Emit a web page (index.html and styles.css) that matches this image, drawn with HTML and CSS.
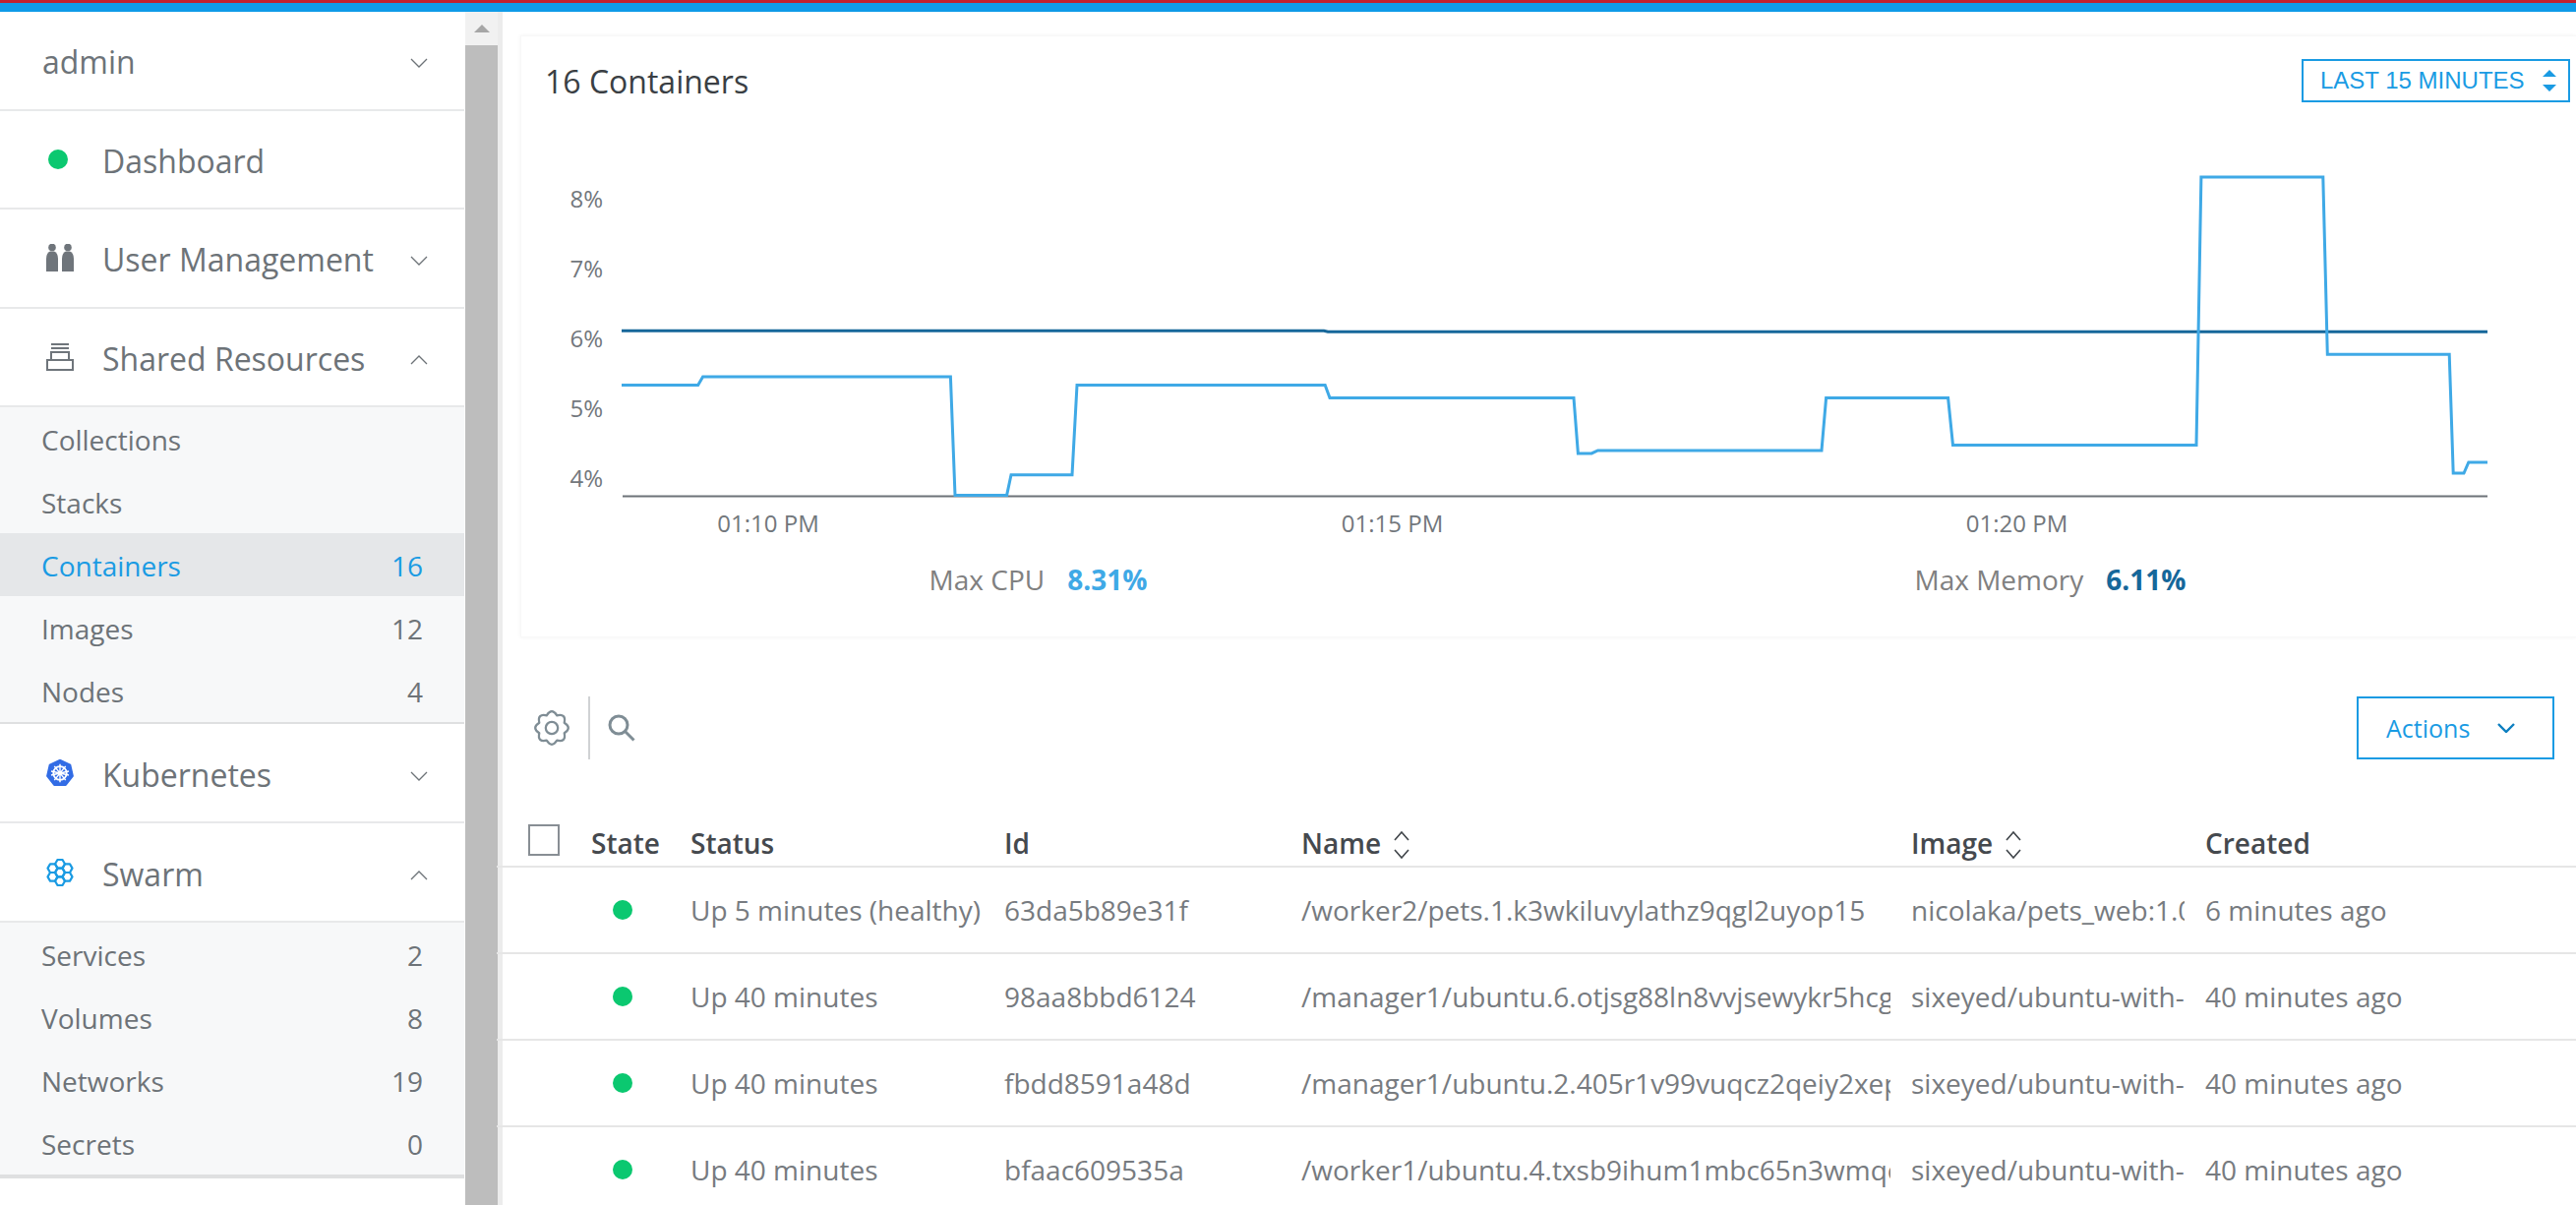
FILE: index.html
```html
<!DOCTYPE html>
<html lang="en">
<head>
    <meta charset="UTF-8">
    <meta name="viewport" content="width=device-width, initial-scale=1.0">
    <title>Containers</title>
    <link rel="stylesheet" href="styles.css">
</head>
<body>
    <div class="topbar"></div>
    <div class="app">
        <nav class="sidebar">
            <div class="nav-row nav-user">
                <span class="nav-label">admin</span>
                <svg class="chevron" viewBox="0 0 18 10"><path d="M1 1l8 8 8-8"/></svg>
            </div>
            <div class="nav-row">
                <span class="nav-icon"><span class="green-dot"></span></span>
                <span class="nav-label">Dashboard</span>
            </div>
            <div class="nav-row">
                <span class="nav-icon">
                    <svg viewBox="0 0 28 28" width="28" height="28" fill="#6f757b">
                        <circle cx="6" cy="3.5" r="3.8"/>
                        <circle cx="22" cy="3.5" r="3.8"/>
                        <path d="M0 28V15q0-6 4-7.5h4Q12 9 12 15v13z"/>
                        <path d="M16 28V15q0-6 4-7.5h4Q28 9 28 15v13z"/>
                    </svg>
                </span>
                <span class="nav-label">User Management</span>
                <svg class="chevron" viewBox="0 0 18 10"><path d="M1 1l8 8 8-8"/></svg>
            </div>
            <div class="nav-row">
                <span class="nav-icon">
                    <svg viewBox="0 0 28 28" width="28" height="28" fill="none" stroke="#6f757b" stroke-width="2">
                        <path d="M5 1h18M5 5h18"/>
                        <path d="M5 17V9h18v8"/>
                        <rect x="1" y="17" width="26" height="10"/>
                    </svg>
                </span>
                <span class="nav-label">Shared Resources</span>
                <svg class="chevron" viewBox="0 0 18 10"><path d="M1 9l8-8 8 8"/></svg>
            </div>
            <ul class="subnav">
                <li class="subnav-row"><span>Collections</span></li>
                <li class="subnav-row"><span>Stacks</span></li>
                <li class="subnav-row active"><span>Containers</span><span>16</span></li>
                <li class="subnav-row"><span>Images</span><span>12</span></li>
                <li class="subnav-row"><span>Nodes</span><span>4</span></li>
            </ul>
            <div class="nav-row nav-row-flush">
                <span class="nav-icon">
                    <svg viewBox="-14.5 -14.5 29 29" width="28" height="28">
                        <polygon points="0,-13.5 10.6,-8.4 13.2,3 5.9,12.2 -5.9,12.2 -13.2,3 -10.6,-8.4" fill="#326ce5" stroke="#326ce5" stroke-width="2.4" stroke-linejoin="round"/>
                        <circle r="7" fill="none" stroke="#fff" stroke-width="1.8"/>
                        <path d="M0-9.5V9.5M-9.3-2.1L9.3 2.1M-9.3 2.1L9.3-2.1M-5.9-7.4L5.9 7.4M5.9-7.4L-5.9 7.4" stroke="#fff" stroke-width="1.5"/>
                        <circle r="2" fill="#fff"/>
                    </svg>
                </span>
                <span class="nav-label">Kubernetes</span>
                <svg class="chevron" viewBox="0 0 18 10"><path d="M1 1l8 8 8-8"/></svg>
            </div>
            <div class="nav-row nav-row-flush">
                <span class="nav-icon">
                    <svg viewBox="0 0 28 28" width="28" height="28" fill="none" stroke="#1a9be3" stroke-width="2.2" stroke-linejoin="round">
                        <path transform="translate(14 14)" d="M-5 0L-2.5-4.33H2.5L5 0L2.5 4.33H-2.5Z"/>
                        <path transform="translate(14 5.3)" d="M-5 0L-2.5-4.33H2.5L5 0L2.5 4.33H-2.5Z"/>
                        <path transform="translate(14 22.7)" d="M-5 0L-2.5-4.33H2.5L5 0L2.5 4.33H-2.5Z"/>
                        <path transform="translate(6.5 9.67)" d="M-5 0L-2.5-4.33H2.5L5 0L2.5 4.33H-2.5Z"/>
                        <path transform="translate(21.5 9.67)" d="M-5 0L-2.5-4.33H2.5L5 0L2.5 4.33H-2.5Z"/>
                        <path transform="translate(6.5 18.33)" d="M-5 0L-2.5-4.33H2.5L5 0L2.5 4.33H-2.5Z"/>
                        <path transform="translate(21.5 18.33)" d="M-5 0L-2.5-4.33H2.5L5 0L2.5 4.33H-2.5Z"/>
                    </svg>
                </span>
                <span class="nav-label">Swarm</span>
                <svg class="chevron" viewBox="0 0 18 10"><path d="M1 9l8-8 8 8"/></svg>
            </div>
            <ul class="subnav subnav-last">
                <li class="subnav-row"><span>Services</span><span>2</span></li>
                <li class="subnav-row"><span>Volumes</span><span>8</span></li>
                <li class="subnav-row"><span>Networks</span><span>19</span></li>
                <li class="subnav-row"><span>Secrets</span><span>0</span></li>
            </ul>
        </nav>

        <div class="scrollbar">
            <div class="scroll-cap"><span class="scroll-arrow"></span></div>
            <div class="scroll-thumb"></div>
        </div>

        <main class="content">
            <section class="card">
                <div class="card-head">
                    <h1 class="card-title">16 Containers</h1>
                    <div class="range-select">
                        <span>LAST 15 MINUTES</span>
                        <svg viewBox="0 0 14 22" width="14" height="22" fill="#1a9be3"><path d="M7 0l7 7H0zM7 22l7-7H0z"/></svg>
                    </div>
                </div>
                <svg class="chart" viewBox="560 104 1980 465" width="1980" height="465">
                    <g class="y-labels">
                        <text x="613" y="211">8%</text>
                        <text x="613" y="282">7%</text>
                        <text x="613" y="353">6%</text>
                        <text x="613" y="424">5%</text>
                        <text x="613" y="495">4%</text>
                    </g>
                    <path class="axis" d="M633 504.6H2529"/>
                    <path class="line-memory" d="M632 336.3H1346L1350 337.2H2529"/>
                    <path class="line-cpu" d="M632 391.4H709.7L714.6 383H966.4L971 503.4H1023.6L1028 482.7H1090L1095 391.4H1347.2L1352 404.5H1600L1604.4 460.9H1618.2L1624.5 457.9H1852L1856.6 404.5H1980.6L1985.5 452.4H2233L2237.9 180H2361.8L2366.3 360.3H2490.2L2494.2 481H2505L2509.8 470H2529"/>
                    <g class="x-labels">
                        <text x="781" y="541">01:10 PM</text>
                        <text x="1415.5" y="541">01:15 PM</text>
                        <text x="2050.5" y="541">01:20 PM</text>
                    </g>
                </svg>
                <div class="stats">
                    <div class="stat"><span class="stat-name">Max CPU</span><b class="stat-cpu">8.31%</b></div>
                    <div class="stat"><span class="stat-name">Max Memory</span><b class="stat-mem">6.11%</b></div>
                </div>
            </section>

            <div class="toolbar">
                <svg class="gear" viewBox="0 0 40 40" width="38" height="38" fill="none" stroke="#7f8d95" stroke-width="2.4" stroke-linejoin="round">
                    <path d="M14.45 6.6Q20 -2 25.55 6.6Q35.56 4.44 33.4 14.45Q42 20 33.4 25.55Q35.56 35.56 25.55 33.4Q20 42 14.45 33.4Q4.44 35.56 6.6 25.55Q-2 20 6.6 14.45Q4.44 4.44 14.45 6.6Z"/>
                    <circle cx="20" cy="20" r="6.5"/>
                </svg>
                <span class="toolbar-sep"></span>
                <svg class="search" viewBox="0 0 28 28" width="28" height="28" fill="none" stroke="#7f8d95" stroke-width="3">
                    <circle cx="11" cy="11" r="9"/>
                    <path d="M17.5 17.5l9 9"/>
                </svg>
                <div class="actions-btn">
                    <span>Actions</span>
                    <svg viewBox="0 0 18 10" width="18" height="10" fill="none" stroke="#0d7fc0" stroke-width="2.4"><path d="M1 1l8 8 8-8"/></svg>
                </div>
            </div>

            <table class="grid">
                <colgroup>
                    <col class="col-check">
                    <col class="col-state">
                    <col class="col-status">
                    <col class="col-id">
                    <col class="col-name">
                    <col class="col-image">
                    <col>
                </colgroup>
                <thead>
                    <tr>
                        <th><span class="checkbox"></span></th>
                        <th>State</th>
                        <th>Status</th>
                        <th>Id</th>
                        <th>Name <svg class="sort" viewBox="0 0 18 28" width="18" height="28"><path d="M2 9l7-8 7 8M2 19l7 8 7-8"/></svg></th>
                        <th>Image <svg class="sort" viewBox="0 0 18 28" width="18" height="28"><path d="M2 9l7-8 7 8M2 19l7 8 7-8"/></svg></th>
                        <th>Created</th>
                    </tr>
                </thead>
                <tbody>
                    <tr>
                        <td></td>
                        <td><span class="green-dot state-dot"></span></td>
                        <td>Up 5 minutes (healthy)</td>
                        <td>63da5b89e31f</td>
                        <td><div class="clip">/worker2/pets.1.k3wkiluvylathz9qgl2uyop15</div></td>
                        <td><div class="clip">nicolaka/pets_web:1.0</div></td>
                        <td>6 minutes ago</td>
                    </tr>
                    <tr>
                        <td></td>
                        <td><span class="green-dot state-dot"></span></td>
                        <td>Up 40 minutes</td>
                        <td>98aa8bbd6124</td>
                        <td><div class="clip">/manager1/ubuntu.6.otjsg88ln8vvjsewykr5hcg</div></td>
                        <td><div class="clip">sixeyed/ubuntu-with-u</div></td>
                        <td>40 minutes ago</td>
                    </tr>
                    <tr>
                        <td></td>
                        <td><span class="green-dot state-dot"></span></td>
                        <td>Up 40 minutes</td>
                        <td>fbdd8591a48d</td>
                        <td><div class="clip">/manager1/ubuntu.2.405r1v99vuqcz2qeiy2xep</div></td>
                        <td><div class="clip">sixeyed/ubuntu-with-u</div></td>
                        <td>40 minutes ago</td>
                    </tr>
                    <tr>
                        <td></td>
                        <td><span class="green-dot state-dot"></span></td>
                        <td>Up 40 minutes</td>
                        <td>bfaac609535a</td>
                        <td><div class="clip">/worker1/ubuntu.4.txsb9ihum1mbc65n3wmqe</div></td>
                        <td><div class="clip">sixeyed/ubuntu-with-u</div></td>
                        <td>40 minutes ago</td>
                    </tr>
                </tbody>
            </table>
        </main>
    </div>
</body>
</html>
```

FILE: styles.css
```css
* {
    box-sizing: border-box;
}
html, body {
    height: 100%;
}
body {
    margin: 0;
    overflow: hidden;
    display: flex;
    flex-direction: column;
    background: #fff;
    font-family: "Open Sans", "Liberation Sans", sans-serif;
    color: #6d7378;
}
.topbar {
    height: 12px;
    flex: none;
    background: #0f9be8;
    border-top: 3px solid #c2202e;
}
.app {
    flex: 1;
    display: flex;
    min-height: 0;
}

/* sidebar */
.sidebar {
    width: 472px;
    flex: none;
    background: #fff;
}
.nav-row {
    height: 100.5px;
    display: flex;
    align-items: center;
    padding: 0 37px 0 47px;
    border-bottom: 2px solid #e8e9ea;
    font-size: 32px;
}
.nav-row-flush {
    height: 101px;
}
.nav-user {
    padding-left: 43px;
}
.nav-icon {
    width: 57px;
    flex: none;
    display: flex;
    align-items: center;
}
.nav-icon svg {
    display: block;
}
.nav-label {
    flex: 1;
    line-height: 1;
    padding-top: 4px;
}
.chevron {
    width: 18px;
    height: 10px;
    flex: none;
    margin-top: 6px;
    fill: none;
    stroke: #6d7378;
    stroke-width: 1.3;
}
.green-dot {
    display: inline-block;
    width: 20px;
    height: 20px;
    border-radius: 50%;
    background: #0bc870;
}
.nav-icon .green-dot {
    margin-left: 2px;
}
.subnav {
    list-style: none;
    margin: 0;
    padding: 0;
    background: #f7f8f9;
    border-bottom: 2px solid #dfe0e1;
    font-size: 28px;
}
.subnav-row {
    height: 64px;
    display: flex;
    align-items: center;
    justify-content: space-between;
    padding: 2px 42px 0;
}
.subnav-last {
    border-bottom-width: 4px;
}
.subnav-row.active {
    background: #e5e7e9;
    color: #1a9be3;
}

/* fake browser scrollbar */
.scrollbar {
    width: 38px;
    flex: none;
    margin-left: 1px;
    display: flex;
    flex-direction: column;
    background: #f0f0f0;
    border-right: 5px solid #ececec;
}
.scroll-cap {
    height: 34px;
    flex: none;
    display: flex;
    justify-content: center;
    padding-top: 13px;
    background: #f1f1f1;
}
.scroll-arrow {
    width: 0;
    height: 0;
    border-left: 8px solid transparent;
    border-right: 8px solid transparent;
    border-bottom: 8px solid #a6a6a6;
}
.scroll-thumb {
    flex: 1;
    background: #bdbdbd;
}

/* main column */
.content {
    flex: 1;
    min-width: 0;
    overflow: hidden;
    margin-left: -6px;
    padding-top: 24px;
}
.card {
    height: 612px;
    margin-left: 24px;
    border: 1px solid #f8f8f8;
    border-right: 0;
    box-shadow: 0 0 4px rgba(0, 0, 0, 0.05);
    background: #fff;
}
.card-head {
    display: flex;
    align-items: center;
    justify-content: space-between;
    height: 44px;
    margin-top: 23px;
    padding: 0 6px 0 24px;
}
.card-title {
    margin: 0;
    font-size: 32px;
    font-weight: 400;
    color: #3a3f44;
}
.range-select {
    width: 273px;
    height: 44px;
    display: flex;
    align-items: center;
    justify-content: space-between;
    padding: 0 12px 0 17px;
    border: 2px solid #1a9be3;
    color: #1a9be3;
    font-family: "Liberation Sans", Arial, sans-serif;
    font-size: 24px;
    white-space: nowrap;
}
.chart {
    display: block;
    margin-left: 30px;
    font-size: 24px;
    fill: #72777c;
}
.y-labels text {
    text-anchor: end;
}
.x-labels text {
    text-anchor: middle;
}
.axis {
    fill: none;
    stroke: #6d7378;
    stroke-width: 2;
}
.line-memory {
    fill: none;
    stroke: #16679a;
    stroke-width: 3;
}
.line-cpu {
    fill: none;
    stroke: #3fa9e6;
    stroke-width: 3;
}
.stats {
    display: grid;
    grid-template-columns: 1029px 1029px;
    padding-left: 11px;
}
.stat {
    display: flex;
    justify-content: center;
    gap: 23px;
    height: 40px;
    align-items: center;
    font-size: 28px;
}
.stat-name {
    color: #808080;
}
.stat b {
    font-weight: 700;
}
.stat-cpu {
    color: #3fa9e6;
}
.stat-mem {
    color: #16679a;
}

.toolbar {
    height: 64px;
    margin-top: 60px;
    display: flex;
    align-items: center;
    padding: 0 22px 0 37px;
}
.toolbar-sep {
    width: 2px;
    height: 64px;
    margin: 0 18px;
    background: #d0d2d4;
}
.actions-btn {
    width: 201px;
    height: 64px;
    margin-left: auto;
    display: flex;
    align-items: center;
    gap: 28px;
    padding-left: 28px;
    border: 2px solid #1a9be3;
    color: #1a9be3;
    font-size: 25px;
}

/* containers table */
.grid {
    width: 100%;
    margin-top: 49px;
    table-layout: fixed;
    border-collapse: collapse;
    font-size: 28px;
    color: #777b80;
}
.col-check {
    width: 96px;
}
.col-state {
    width: 101px;
}
.col-status {
    width: 319px;
}
.col-id {
    width: 302px;
}
.col-name {
    width: 620px;
}
.col-image {
    width: 299px;
}
.grid th {
    height: 60px;
    padding: 0 0 4px;
    text-align: left;
    font-weight: 600;
    color: #45494e;
    border-bottom: 2px solid #e6e6e6;
    vertical-align: bottom;
    white-space: nowrap;
}
.grid td {
    height: 88px;
    padding: 0;
    border-bottom: 2px solid #e6e6e6;
    white-space: nowrap;
}
.clip {
    width: calc(100% - 21px);
    overflow: hidden;
}
.checkbox {
    display: block;
    width: 32px;
    height: 32px;
    margin: 0 0 6px 32px;
    border: 2px solid #888e94;
}
.sort {
    margin-left: 5px;
    vertical-align: -5px;
    fill: none;
    stroke: #3f4449;
    stroke-width: 1.6;
}
.state-dot {
    display: block;
    margin-left: 22px;
}
```
